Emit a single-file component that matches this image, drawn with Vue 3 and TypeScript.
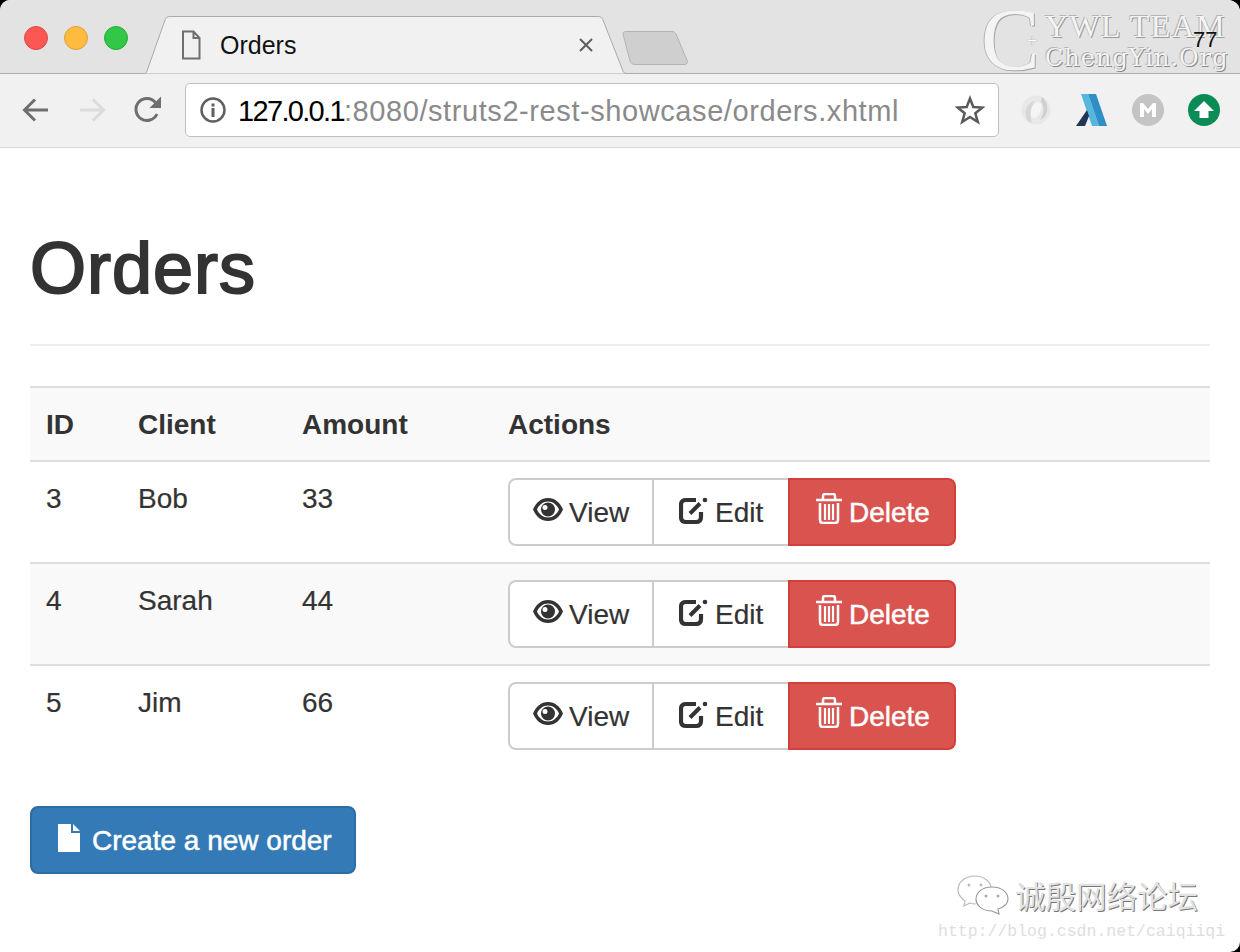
<script setup lang="ts">
interface Order {
  id: number;
  client: string;
  amount: number;
}

const orders: Order[] = [
  { id: 3, client: 'Bob', amount: 33 },
  { id: 4, client: 'Sarah', amount: 44 },
  { id: 5, client: 'Jim', amount: 66 },
];
</script>

<template>
  <div class="window">
    <header class="tabstrip">
      <div class="lights">
        <span class="light red"></span>
        <span class="light yellow"></span>
        <span class="light green"></span>
      </div>
      <div class="tab">
        <svg class="tab-shape" width="486" height="58" viewBox="0 0 486 58">
          <path d="M0 57.5 C1 57.5 1.500 56.500 2 55 L20 4 C21 1.500 22.500 .5 25 .5 H453 C455.500 .5 457 1.500 458 4 L478 55 C478.500 56.500 479.500 57.500 482 57.500" fill="#f1f1f1" stroke="#ababab" stroke-width="1" />
        </svg>
        <svg class="tab-file" width="20" height="30" viewBox="0 0 20 30">
          <path d="M2 1.5 H12.5 L18.5 8 V28.5 H2 Z M12.5 1.5 V8 H18.5" fill="none" stroke="#6f6f6f" stroke-width="2" />
        </svg>
        <span class="tab-title">Orders</span>
        <svg class="tab-close" width="16" height="16" viewBox="0 0 16 16">
          <path d="M2 2 L14 14 M14 2 L2 14" stroke="#5f5f5f" stroke-width="2" />
        </svg>
      </div>
      <svg class="new-tab" width="66" height="34" viewBox="0 0 66 34">
        <path d="M1 3 C1 1.500 2 .5 4 .5 H50 C52 .5 53 1.500 54 3 L65 29 C66 32 65 33.500 62 33.500 H13 C10 33.500 9 32 8 30 Z" fill="#cfcfcf" stroke="#b4b4b4" />
      </svg>
      <div class="brand">
        <span class="brand-c">C</span>
        <span class="brand-plus">+</span>
        <div class="brand-lines">
          <span class="brand-top">YWL TEAM</span>
          <span class="brand-bottom">ChengYin.Org</span>
        </div>
      </div>
      <span class="counter">77</span>
    </header>

    <nav class="toolbar">
      <button class="nav-btn">
        <svg width="30" height="30" viewBox="0 0 30 30">
          <path d="M27 15 H4 M14 4.500 L3.500 15 L14 25.500" fill="none" stroke="#6e6e6e" stroke-width="3" />
        </svg>
      </button>
      <button class="nav-btn">
        <svg width="30" height="30" viewBox="0 0 30 30">
          <path d="M3 15 H26 M16 4.500 L26.500 15 L16 25.500" fill="none" stroke="#dcdcdc" stroke-width="3" />
        </svg>
      </button>
      <button class="nav-btn">
        <svg width="30" height="30" viewBox="0 0 30 30">
          <path d="M24 19 A11 11 0 1 1 22.500 7.500" fill="none" stroke="#6e6e6e" stroke-width="3" />
          <path d="M28 1.500 V13 H16.500 Z" fill="#6e6e6e" />
        </svg>
      </button>
      <div class="omnibox">
        <svg width="28" height="28" viewBox="0 0 28 28">
          <circle cx="14" cy="14" r="11.500" fill="none" stroke="#606060" stroke-width="2.500" />
          <rect x="12.500" y="12" width="3" height="9" fill="#606060" />
          <rect x="12.500" y="7.500" width="3" height="3" fill="#606060" />
        </svg>
        <span class="url"><span class="host">127.0.0.1</span>:8080/struts2-rest-showcase/orders.xhtml</span>
        <svg class="star" width="30" height="30" viewBox="0 0 30 30">
          <path d="M15 3.500 L18.300 12 L27.500 12.500 L20.300 18.300 L22.800 27 L15 22 L7.200 27 L9.700 18.300 L2.500 12.500 L11.700 12 Z" fill="none" stroke="#5a5a5a" stroke-width="2.500" stroke-linejoin="miter" />
        </svg>
      </div>
      <div class="extensions">
        <svg width="32" height="32" viewBox="0 0 32 32">
          <circle cx="16" cy="16" r="14.500" fill="#e8e8e8" />
          <ellipse cx="16" cy="16" rx="5" ry="8.500" transform="rotate(25 16 16)" fill="#f4f4f4" />
          <path d="M8 27 C2 18 8 8 15 7 C11 12 9 20 12 29 Z" fill="#d6d6d6" />
          <path d="M22 3 C30 10 29 22 20 26 C24 20 25 12 21 8 Z" fill="#cfcfcf" />
        </svg>
        <svg width="32" height="32" viewBox="0 0 32 32">
          <path d="M5 0 H12 L23 32 H16 Z" fill="#55b6de" />
          <path d="M12 0 H20 L31 32 H23 Z" fill="#2f8fc5" />
          <path d="M0 32 L11 16 L13 22 L9 32 Z" fill="#1f3654" />
        </svg>
        <svg width="32" height="32" viewBox="0 0 32 32">
          <circle cx="16" cy="16" r="16" fill="#c4c4c4" />
          <path d="M8 23 V9 H11 L16 15 L21 9 H24 V23 H20 V15 L16 20 L12 15 V23 Z" fill="#fff" />
        </svg>
        <svg width="32" height="32" viewBox="0 0 32 32">
          <circle cx="16" cy="16" r="16" fill="#0b8b55" />
          <path d="M16 7 L26 17 H20.500 V24 H11.500 V17 H6 Z" fill="#fff" />
        </svg>
      </div>
    </nav>

    <main class="page">
      <div class="page-header">
        <h1>Orders</h1>
      </div>

      <table class="orders">
        <colgroup>
          <col class="col-id" />
          <col class="col-client" />
          <col class="col-amount" />
          <col />
        </colgroup>
        <thead>
          <tr>
            <th>ID</th>
            <th>Client</th>
            <th>Amount</th>
            <th>Actions</th>
          </tr>
        </thead>
        <tbody>
          <tr v-for="order in orders" :key="order.id">
            <td>{{ order.id }}</td>
            <td>{{ order.client }}</td>
            <td>{{ order.amount }}</td>
            <td>
              <div class="btn-group">
                <a class="btn btn-default">
                  <svg class="icon icon-eye" width="30" height="23" viewBox="0 0 30 23">
                    <path fill="#333" fill-rule="evenodd" d="M15 0 C22 0 27 4.500 30 11.500 C27 18.500 22 23 15 23 C8 23 3 18.500 0 11.500 C3 4.500 8 0 15 0 Z M15 3.500 C10 3.500 6 7 4 11.500 C6 16 10 19.500 15 19.500 C20 19.500 24 16 26 11.500 C24 7 20 3.500 15 3.500 Z" />
                    <path fill="#333" fill-rule="evenodd" d="M15 4.500 A7 7 0 1 1 15 18.500 A7 7 0 1 1 15 4.500 Z M12 7 A2.500 2.500 0 1 0 12 12 A2.500 2.500 0 1 0 12 7 Z" />
                  </svg>
                  View
                </a>
                <a class="btn btn-default">
                  <svg class="icon icon-edit" width="29" height="28" viewBox="0 0 29 28">
                    <path d="M17 3 H7 C3.500 3 2 4.500 2 8 V20 C2 23.500 3.500 25 7 25 H17 C20.500 25 22 23.500 22 20 V15" fill="none" stroke="#333" stroke-width="4.200" />
                    <path d="M11 16.500 L21 6.500" fill="none" stroke="#333" stroke-width="4" />
                    <circle cx="26" cy="3" r="2.300" fill="#333" />
                  </svg>
                  Edit
                </a>
                <a class="btn btn-danger">
                  <svg class="icon icon-trash" width="26" height="31" viewBox="0 0 26 31">
                    <path d="M0 7 H26 M7 6 V3 C7 1.500 8 1 9 1 H17 C18 1 19 1.500 19 3 V6" fill="none" stroke="#fff" stroke-width="2.500" />
                    <path d="M4 10 V27 C4 29 5 30 7 30 H19 C21 30 22 29 22 27 V10" fill="none" stroke="#fff" stroke-width="2.500" />
                    <path d="M9 11 V27 M13 11 V27 M17 11 V27" fill="none" stroke="#fff" stroke-width="2.200" />
                  </svg>
                  Delete
                </a>
              </div>
            </td>
          </tr>
        </tbody>
      </table>

      <a class="btn btn-primary">
        <svg class="icon icon-file" width="22" height="28" viewBox="0 0 22 28">
          <path d="M0 0 H13 V9 H22 V28 H0 Z" fill="#fff" />
          <path d="M15 0 L22 7 H15 Z" fill="#fff" />
        </svg>
        Create a new order
      </a>
    </main>

    <div class="mp-mark">
      <svg width="52" height="40" viewBox="0 0 52 40">
        <path d="M18 1 C8 1 1 7 1 15 C1 20 4 23 8 26 L7 31 L13 28 C15 29 17 29 19 29" fill="#fff" stroke="#bbb" stroke-width="1.200" />
        <path d="M18 1 C26 1 33 6 34 12" fill="none" stroke="#bbb" stroke-width="1.200" />
        <path d="M35 12 C26 12 19 17 19 24 C19 31 26 36 35 36 L42 39 L41 34 C47 32 51 28 51 24 C51 17 44 12 35 12 Z" fill="#fff" stroke="#999" stroke-width="1.200" />
        <circle cx="12" cy="10" r="1.500" fill="#bbb" />
        <circle cx="24" cy="10" r="1.500" fill="#bbb" />
        <circle cx="29" cy="21" r="1.500" fill="#aaa" />
        <circle cx="41" cy="21" r="1.500" fill="#aaa" />
      </svg>
      <span class="mp-name">诚殷网络论坛</span>
    </div>
    <span class="blog-mark">http://blog.csdn.net/caiqiiqi</span>
  </div>
</template>

<style scoped>
.window {
  position: relative;
  width: 1240px;
  height: 952px;
  overflow: hidden;
  background: #fff;
  border-radius: 10px 12px 10px 0;
  font-family: "Liberation Sans", Arial, sans-serif;
  color: #333;
}

.tabstrip {
  position: relative;
  display: flex;
  align-items: flex-end;
  height: 74px;
  box-sizing: border-box;
  background: #e3e3e3;
  border-bottom: 1px solid #adadad;
}

.lights {
  display: flex;
  gap: 16px;
  align-self: flex-start;
  margin: 26px 0 0 24px;
}

.light {
  width: 24px;
  height: 24px;
  border-radius: 50%;
  box-sizing: border-box;
}

.red { background: #fc5753; border: 1px solid #df4744; }
.yellow { background: #fdbc40; border: 1px solid #de9f34; }
.green { background: #33c748; border: 1px solid #27aa35; }

.tab {
  position: relative;
  display: flex;
  align-items: center;
  flex: none;
  width: 486px;
  height: 58px;
  margin: 0 0 -1px 17px;
  padding-left: 36px;
  box-sizing: border-box;
}

.tab-shape {
  position: absolute;
  left: 0;
  top: 0;
}

.tab-file,
.tab-title,
.tab-close {
  position: relative;
}

.tab-title {
  margin-left: 19px;
  font-size: 25px;
  color: #111;
}

.tab-close {
  margin-left: 282px;
}

.new-tab {
  margin: 0 0 8px -9px;
}

.brand {
  position: absolute;
  left: 981px;
  top: 8px;
  display: flex;
  align-items: flex-start;
  font-family: "Liberation Serif", serif;
  color: #f4f4f4;
}

.brand-c {
  flex: none;
  width: 61px;
  margin-top: -12px;
  font-size: 88px;
  line-height: 88px;
  font-weight: 400;
  text-shadow: 1px 1px 0 #a5a5a5, -1px 0 0 #b5b5b5;
}

.brand-plus {
  flex: none;
  width: 10px;
  margin: 22px 0 0 -15px;
  font-size: 18px;
  line-height: 22px;
  color: #fff;
  text-shadow: 0 0 1px #666;
}

.brand-lines {
  display: flex;
  flex-direction: column;
  margin-left: 8px;
}

.brand-top {
  margin-top: 4px;
  font-size: 32px;
  line-height: 28px;
  letter-spacing: 1.400px;
  white-space: nowrap;
  text-shadow: 1px 1px 0 #999, -1px -1px 0 #b5b5b5;
}

.brand-bottom {
  margin-top: 3px;
  font-family: "DejaVu Serif", serif;
  font-size: 24px;
  line-height: 30px;
  letter-spacing: 1px;
  white-space: nowrap;
  text-shadow: 1px 1px 0 #888, -1px -1px 0 #b5b5b5;
}

.counter {
  position: absolute;
  left: 1193px;
  top: 28px;
  font-size: 22px;
  line-height: 24px;
  color: #111;
}

.toolbar {
  display: flex;
  align-items: center;
  height: 74px;
  box-sizing: border-box;
  padding: 0 0 2px 21px;
  background: #f1f1f1;
  border-bottom: 1px solid #d9d9d9;
}

.nav-btn {
  display: flex;
  width: 30px;
  height: 30px;
  margin-right: 26px;
  padding: 0;
  border: none;
  background: none;
}

.nav-btn:nth-child(3) {
  margin-right: 22px;
}

.omnibox {
  display: flex;
  align-items: center;
  width: 814px;
  height: 54px;
  box-sizing: border-box;
  padding: 0 13px;
  background: #fff;
  border: 1px solid #c0c0c0;
  border-radius: 5px;
}

.url {
  flex: 1;
  margin-left: 11px;
  padding-top: 4px;
  font-size: 29px;
  letter-spacing: .58px;
  color: #8a8a8a;
  white-space: nowrap;
}

.host {
  letter-spacing: -1.670px;
  color: #000;
}

.extensions {
  display: flex;
  align-items: center;
  gap: 24px;
  margin-left: 21px;
}

.page {
  padding: 0 30px;
}

.page-header {
  margin-top: 81px;
  padding-bottom: 36px;
  border-bottom: 2px solid #eee;
}

h1 {
  margin: 0;
  font-size: 72px;
  line-height: 79px;
  font-weight: 500;
  letter-spacing: 1px;
  color: #333;
  -webkit-text-stroke: 2px #333;
}

.orders {
  width: 100%;
  margin-top: 40px;
  border-collapse: collapse;
  table-layout: fixed;
  font-size: 28px;
  line-height: 40px;
}

.col-id { width: 92px; }
.col-client { width: 164px; }
.col-amount { width: 206px; }

th,
td {
  padding: 16px;
  text-align: left;
  vertical-align: top;
}

th {
  height: 72px;
  box-sizing: border-box;
  font-weight: 700;
  border-top: 2px solid #ddd;
  border-bottom: 2px solid #ddd;
  padding-top: 17px;
  padding-bottom: 15px;
}

thead tr {
  background: #f9f9f9;
}

td {
  height: 100px;
  box-sizing: border-box;
  line-height: 42px;
  border-bottom: 2px solid #ddd;
  -webkit-text-stroke: .2px #333;
}

tbody tr:nth-child(2) {
  background: #f9f9f9;
}

tbody tr:last-child td {
  border-bottom: none;
}

.btn-group {
  display: flex;
  width: 448px;
}

.btn {
  display: inline-flex;
  align-items: center;
  gap: 7px;
  height: 68px;
  box-sizing: border-box;
  padding: 2px 26px 0;
  font-size: 28px;
  line-height: 40px;
  white-space: nowrap;
  border: 2px solid transparent;
}

.btn-default {
  background: #fff;
  color: #333;
  border-color: #ccc;
}

.btn-default:first-child {
  width: 146px;
  padding-left: 23px;
  padding-right: 0;
  gap: 6px;
  border-radius: 8px 0 0 8px;
}

.btn-default:nth-child(2) {
  width: 136px;
  margin-left: -2px;
  padding-left: 25px;
  padding-right: 0;
  gap: 7px;
  border-left-color: #ccc;
  border-right: none;
}

.btn-danger {
  width: 168px;
  padding-left: 26px;
  padding-right: 0;
  gap: 7px;
  background: #d9534f;
  border-color: #d43f3a;
  color: #fff;
  border-radius: 0 8px 8px 0;
  -webkit-text-stroke: .5px #fff;
}

.btn-primary {
  width: 326px;
  margin-top: 40px;
  padding-left: 26px;
  padding-right: 0;
  gap: 12px;
  background: #337ab7;
  border-color: #2e6da4;
  border-radius: 8px;
  color: #fff;
  -webkit-text-stroke: .5px #fff;
}

.icon {
  flex: none;
}

.icon-eye { margin-top: -7px; }
.icon-edit { margin-top: -4px; }
.icon-trash { margin-top: -9px; }
.icon-file { margin-top: -6px; }

.mp-mark {
  position: absolute;
  left: 957px;
  top: 875px;
  display: flex;
  align-items: center;
  gap: 6px;
}

.mp-name {
  font-family: "Noto Sans CJK SC", "Liberation Sans", sans-serif;
  font-size: 30.500px;
  line-height: 40px;
  color: #e2e2e2;
  text-shadow: 1px 1px 0 #777;
}

.blog-mark {
  position: absolute;
  left: 938px;
  top: 920px;
  font-family: "Liberation Mono", monospace;
  font-size: 16.500px;
  line-height: 24px;
  color: #dedede;
  white-space: nowrap;
}
</style>

<style>
html,
body {
  background: #000;
}
</style>
